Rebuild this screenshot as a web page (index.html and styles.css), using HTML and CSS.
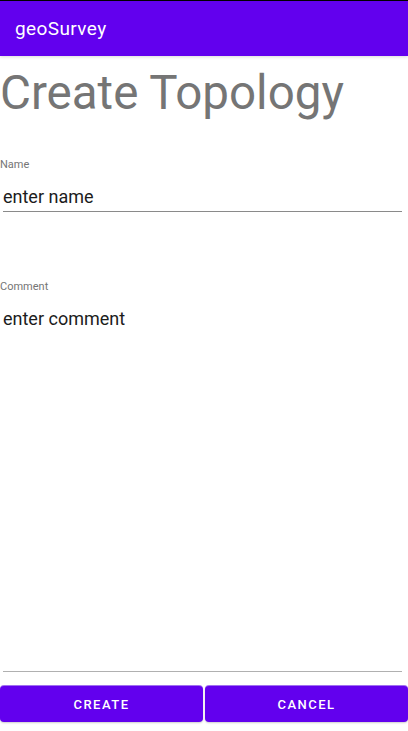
FILE: index.html
```html
<!DOCTYPE html>
<html>
<head>
<meta charset="utf-8">
<link rel="stylesheet" href="styles.css">
</head>
<body>
<div class="screen">
  <header class="appbar"><span class="appbar-title">geoSurvey</span></header>
  <main class="content">
    <h1 class="page-title">Create Topology</h1>
    <div class="field">
      <label class="field-label">Name</label>
      <div class="field-input underlined">enter name</div>
    </div>
    <div class="field comment">
      <label class="field-label">Comment</label>
      <div class="field-input">enter comment</div>
    </div>
  </main>
  <div class="divider"></div>
  <footer class="actions">
    <button class="btn">CREATE</button>
    <button class="btn">CANCEL</button>
  </footer>
</div>
</body>
</html>
```
FILE: styles.css
```css
html, body {
  margin: 0;
  padding: 0;
  background: #ffffff;
}
.screen {
  width: 408px;
  height: 731px;
  display: flex;
  flex-direction: column;
  font-family: Roboto, "Noto Sans", sans-serif;
  border-top: 1px solid #000;
  box-sizing: border-box;
  overflow: hidden;
}
.appbar {
  height: 55px;
  background: #6200ee;
  display: flex;
  align-items: center;
  padding-left: 15px;
  box-shadow: 0 1px 3px rgba(0,0,0,0.15);
  position: relative;
  z-index: 1;
}
.appbar-title {
  color: #fff;
  font-size: 19px;
  font-weight: 400;
  letter-spacing: 0.4px;
}
.content {
  flex: 1;
  display: flex;
  flex-direction: column;
}
.page-title {
  margin: 9px 0 0 0;
  font-size: 47.5px;
  font-weight: 400;
  color: #757575;
  line-height: 56px;
}
.field {
  display: flex;
  flex-direction: column;
  margin-top: 37px;
}
.field.comment {
  margin-top: 68px;
}
.field-label {
  font-size: 11px;
  color: #757575;
  line-height: 14px;
}
.field-input {
  margin: 14px 6px 0 3px;
  font-size: 18px;
  color: #1c1c1c;
  line-height: 22px;
}
.field-input.underlined {
  border-bottom: 1px solid #8a8a8a;
  padding-bottom: 3px;
}
.divider {
  height: 1px;
  background: #b0b0b0;
  margin: 0 6px 14px 3px;
}
.actions {
  display: flex;
  gap: 2px;
  margin-bottom: 9px;
}
.btn {
  flex: 1;
  height: 36px;
  border: none;
  border-radius: 4px;
  background: #6200ee;
  color: #fff;
  font-family: Roboto, "Noto Sans", sans-serif;
  font-size: 13px;
  font-weight: 500;
  letter-spacing: 1.5px;
  padding: 0;
  box-shadow: 0 -1px 0 #a070f0, 0 1px 2px rgba(0,0,0,0.2);
}
```
